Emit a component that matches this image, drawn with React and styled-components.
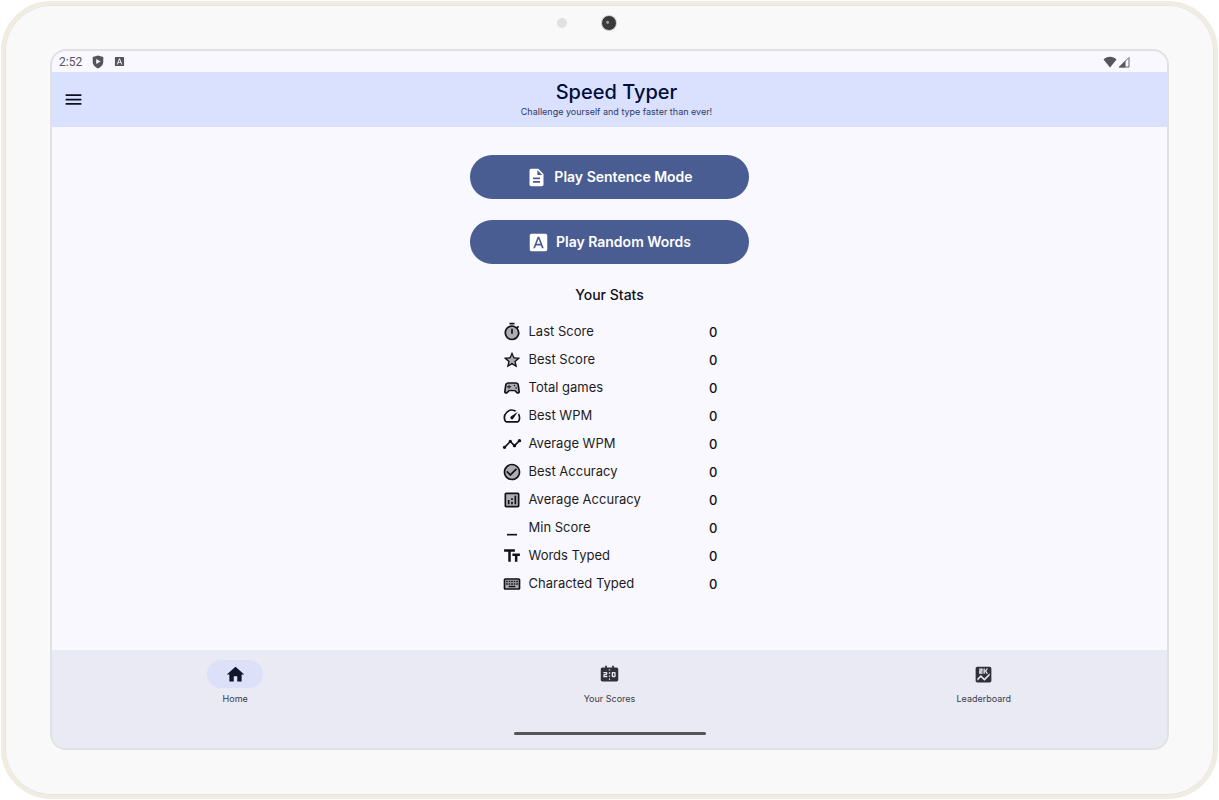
import React from "react";
import styled, { createGlobalStyle } from "styled-components";
import {
  MdMenu,
  MdDescription,
  MdFontDownload,
  MdOutlineTimer,
  MdStarOutline,
  MdOutlineSportsEsports,
  MdOutlineSpeed,
  MdTimeline,
  MdCheckCircleOutline,
  MdOutlineAnalytics,
  MdMinimize,
  MdTextFields,
  MdOutlineKeyboard,
  MdHome,
  MdScoreboard,
  MdScore,
} from "react-icons/md";

const GlobalStyle = createGlobalStyle`
  *, *::before, *::after { box-sizing: border-box; }
  body {
    margin: 0;
    background: #fff;
    color: #111116;
    font-family: Inter, "Open Sans", sans-serif;
  }
  h1, h2, p, dl, dt, dd, ul { margin: 0; padding: 0; }
  svg { display: block; flex-shrink: 0; }
`;

const Page = styled.div`
  min-height: 100vh;
  display: flex;
  padding: 1px;
`;

const Tablet = styled.div`
  flex: 1;
  display: flex;
  flex-direction: column;
  padding: 0 45px 45px;
  background: #f9f9f9;
  border: 4px solid #f0ece1;
  border-radius: 50px;
  box-shadow: inset 0 0 0 1px #e6e4dc;
`;

const Bezel = styled.div`
  height: 44px;
  display: flex;
  justify-content: center;
  align-items: center;
  gap: 34px;
  padding: 0 45px 8px 0;
`;

const Sensor = styled.span`
  width: 10px;
  height: 10px;
  border-radius: 50%;
  background: #e0e0e0;
`;

const Camera = styled.span`
  width: 16px;
  height: 16px;
  border-radius: 50%;
  border: 1px solid #c8c8c8;
  background: radial-gradient(circle at 40% 45%, #9a9a9a 0 1px, #3a3a3c 2px);
`;

const Screen = styled.div`
  flex: 1;
  display: flex;
  flex-direction: column;
  overflow: hidden;
  border: 2px solid #e1e1e1;
  border-radius: 16px;
  background: #faf8ff;
`;

const StatusBar = styled.div`
  height: 21px;
  display: flex;
  justify-content: space-between;
  align-items: center;
  padding: 0 37px 0 7px;
  color: #55555a;
  font: 12px/20px Roboto, sans-serif;
`;

const StatusGroup = styled.div`
  display: flex;
  align-items: center;
  gap: ${(p) => p.$gap}px;
`;

const Header = styled.header`
  height: 55px;
  display: flex;
  align-items: center;
  padding-right: 28px;
  background: #dae1ff;
`;

const MenuButton = styled.button`
  width: 42px;
  height: 42px;
  display: grid;
  place-items: center;
  padding: 0;
  border: 0;
  background: none;
  color: #0c1020;
  cursor: pointer;
`;

const Titles = styled.div`
  flex: 1;
  text-align: center;
`;

const Title = styled.h1`
  font-size: 20px;
  line-height: 24px;
  font-weight: 500;
  color: #020c3a;
`;

const Subtitle = styled.p`
  font-size: 9px;
  line-height: 16px;
  color: #2c3968;
`;

const Main = styled.main`
  flex: 1;
  display: flex;
  flex-direction: column;
  align-items: center;
  padding-top: 28px;
`;

const Actions = styled.div`
  width: 25%;
  min-width: 240px;
  display: flex;
  flex-direction: column;
  gap: 21px;
`;

const PlayButton = styled.button`
  height: 44px;
  display: flex;
  justify-content: center;
  align-items: center;
  gap: 7px;
  padding: 0 16px;
  border: 0;
  border-radius: 22px;
  background: #495d92;
  color: #fff;
  font: 600 14px/20px Inter, "Open Sans", sans-serif;
  cursor: pointer;
`;

const StatsHeading = styled.h2`
  margin-top: 21px;
  font-size: 14px;
  line-height: 20px;
  font-weight: 500;
`;

const Stats = styled.dl`
  width: 216px;
  margin-top: 13px;
`;

const StatRow = styled.div`
  height: 28px;
  display: flex;
  align-items: center;
`;

const StatLabel = styled.dt`
  flex: 1;
  padding: 0 0 2px 7px;
  font-size: 13px;
  line-height: 18px;
  color: #1c1c22;
`;

const StatValue = styled.dd`
  font-size: 13px;
  line-height: 18px;
  font-weight: 500;
`;

const NavArea = styled.footer`
  display: flex;
  flex-direction: column;
  align-items: center;
  padding: 10px 0 13px;
  background: #eaeaf4;
`;

const Nav = styled.nav`
  width: 100%;
  display: flex;
  gap: 8px;
  height: 72px;
`;

const NavItem = styled.a`
  flex: 1;
  display: flex;
  flex-direction: column;
  align-items: center;
  gap: 5px;
  color: #3a3b44;
  font-size: 9px;
  line-height: 12px;
  text-decoration: none;
`;

const NavPill = styled.span`
  width: 56px;
  height: 28px;
  display: grid;
  place-items: center;
  border-radius: 14px;
  background: ${(p) => (p.$active ? "#dce1f9" : "transparent")};
  color: ${(p) => (p.$active ? "#10152a" : "#2f303a")};
`;

const GestureBar = styled.div`
  width: 192px;
  height: 3px;
  border-radius: 2px;
  background: #55545b;
`;

function TwoTone({ icon: Icon, children }) {
  return (
    <svg width="20" height="20" viewBox="0 0 24 24" aria-hidden="true">
      <g fill="#aeadb4">{children}</g>
      <Icon size={24} />
    </svg>
  );
}

const stats = [
  ["Last Score", MdOutlineTimer, <circle cx="12" cy="13" r="8" />],
  ["Best Score", MdStarOutline, <path d="M12 4l2.4 5.8 6.3.5-4.8 4.1 1.5 6.1-5.4-3.3-5.4 3.3 1.5-6.1-4.8-4.1 6.3-.5z" />],
  ["Total games", MdOutlineSportsEsports, <path d="M7 6h10l2 1.5 1.7 10.2-1.4.2-3.3-4H8l-3.3 4-1.4-.2L5 7.500z" />],
  ["Best WPM", MdOutlineSpeed, null],
  ["Average WPM", MdTimeline, null],
  ["Best Accuracy", MdCheckCircleOutline, <circle cx="12" cy="12" r="9" />],
  ["Average Accuracy", MdOutlineAnalytics, <path d="M4 4h16v16H4z" />],
  ["Min Score", MdMinimize, null],
  ["Words Typed", MdTextFields, null],
  ["Characted Typed", MdOutlineKeyboard, <path d="M3 6h18v12H3z" />],
];

const tabs = [
  ["Home", MdHome],
  ["Your Scores", MdScoreboard],
  ["Leaderboard", MdScore],
];

function ShieldIcon() {
  return (
    <svg width="12" height="14" viewBox="0 0 12 14" aria-hidden="true">
      <path fill="#55555a" fillRule="evenodd" d="M6 .5L11.300 2v4.800c0 3-2.200 5.400-5.300 6.700C2.900 12.200.700 9.800.700 6.800V2zM4.200 3.900v5.200l4.300-2.600z" />
    </svg>
  );
}

function WifiIcon() {
  return (
    <svg width="14" height="12" viewBox="0 0 14 12" aria-hidden="true">
      <path fill="#55555a" d="M7 11.500L.500 3.500C2.300 1.700 4.500.800 7 .800s4.700.900 6.500 2.700z" />
    </svg>
  );
}

function SignalIcon() {
  return (
    <svg width="12" height="12" viewBox="0 0 12 12" aria-hidden="true">
      <path fill="#55555a" d="M.500 11.500L7.500 4.500v7z" />
      <path fill="none" stroke="#66666a" d="M1.500 11h9.500V1.500z" />
    </svg>
  );
}

export default function App() {
  return (
    <Page>
      <GlobalStyle />
      <Tablet>
        <Bezel>
          <Sensor />
          <Camera />
        </Bezel>
        <Screen>
          <StatusBar>
            <StatusGroup $gap={10}>
              <time>2:52</time>
              <ShieldIcon />
              <MdFontDownload size={11} />
            </StatusGroup>
            <StatusGroup $gap={1}>
              <WifiIcon />
              <SignalIcon />
            </StatusGroup>
          </StatusBar>
          <Header>
            <MenuButton aria-label="Open menu">
              <MdMenu size={21} />
            </MenuButton>
            <Titles>
              <Title>Speed Typer</Title>
              <Subtitle>Challenge yourself and type faster than ever!</Subtitle>
            </Titles>
          </Header>
          <Main>
            <Actions>
              <PlayButton>
                <MdDescription size={21} />
                Play Sentence Mode
              </PlayButton>
              <PlayButton>
                <MdFontDownload size={21} />
                Play Random Words
              </PlayButton>
            </Actions>
            <StatsHeading>Your Stats</StatsHeading>
            <Stats>
              {stats.map(([label, icon, shade]) => (
                <StatRow key={label}>
                  <TwoTone icon={icon}>{shade}</TwoTone>
                  <StatLabel>{label}</StatLabel>
                  <StatValue>0</StatValue>
                </StatRow>
              ))}
            </Stats>
          </Main>
          <NavArea>
            <Nav>
              {tabs.map(([label, Icon], i) => (
                <NavItem key={label} href="#" aria-current={i === 0 ? "page" : undefined}>
                  <NavPill $active={i === 0}>
                    <Icon size={21} />
                  </NavPill>
                  {label}
                </NavItem>
              ))}
            </Nav>
            <GestureBar />
          </NavArea>
        </Screen>
      </Tablet>
    </Page>
  );
}
